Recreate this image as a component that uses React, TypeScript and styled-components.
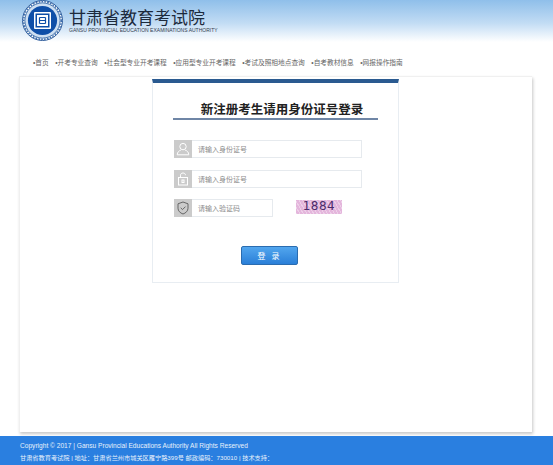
import { FunctionComponent, ReactNode } from "react";
import styled, { createGlobalStyle } from "styled-components";

const GlobalStyle = createGlobalStyle`
  html, body {
    margin: 0;
    padding: 0;
    background: #fff;
    font-family: "Liberation Sans", "Noto Sans CJK SC", sans-serif;
  }
  * {
    box-sizing: border-box;
  }
`;

const navItems = [
  "首页",
  "开考专业查询",
  "社会型专业开考课程",
  "应用型专业开考课程",
  "考试及照相地点查询",
  "自考教材信息",
  "网报操作指南",
];

const Logo = () => (
  <svg width="41" height="41" viewBox="0 0 41 41">
    <circle cx="20.5" cy="20.5" r="20" fill="#fff" stroke="#2f5d9c" strokeWidth="1" />
    <circle cx="20.5" cy="20.5" r="17.6" fill="#cfe0f2" stroke="#4a78b0" strokeWidth="1" />
    <circle cx="20.5" cy="20.5" r="18.8" fill="none" stroke="#3f6fae" strokeWidth="1.6" strokeDasharray="1.6 1.3" />
    <circle cx="20.5" cy="20.5" r="14.6" fill="#0f4fa8" />
    <rect x="12" y="12" width="17" height="17" rx="1" fill="#fff" />
    <rect x="13.5" y="13.5" width="14" height="14" fill="#0f4fa8" />
    <rect x="15" y="15" width="11" height="11" fill="#fff" />
    <path d="M17.5 17.5h6M17.5 20.5h6M17.5 23.5h6M17.5 17.5v6M23.5 17.5v6" stroke="#0f4fa8" strokeWidth="1.2" fill="none" />
  </svg>
);

const UserIcon = () => (
  <svg width="14" height="14" viewBox="0 0 14 14" fill="none" stroke="#fff" strokeWidth="1">
    <circle cx="7" cy="4.6" r="3.2" />
    <path d="M1.2 12.8c0-2.6 2-4.3 3.6-4.6M12.8 12.8c0-2.6-2-4.3-3.6-4.6M1.2 12.8h11.6" />
  </svg>
);

const LockIcon = () => (
  <svg width="14" height="14" viewBox="0 0 14 14" fill="none" stroke="#fff" strokeWidth="1">
    <rect x="2.5" y="5.5" width="9" height="7.5" />
    <path d="M4.5 5.5V3.2C4.5 1.8 5.6 1 7 1s2.5.8 2.5 2.2" />
    <rect x="6" y="8" width="2" height="2.5" />
  </svg>
);

const ShieldIcon = () => (
  <svg width="14" height="14" viewBox="0 0 14 14" fill="none" stroke="#666" strokeWidth="1">
    <path d="M7 1l5 1.8v4.4c0 2.8-2.2 4.8-5 5.8-2.8-1-5-3-5-5.8V2.8z" />
    <path d="M4.7 6.8l1.8 1.8 3-3" />
  </svg>
);

const Field: FunctionComponent<{
  icon: ReactNode;
  placeholder: string;
  short?: boolean;
}> = (props) => {
  return (
    <FieldBox $short={props.short}>
      <IconCell>{props.icon}</IconCell>
      <FieldText>{props.placeholder}</FieldText>
    </FieldBox>
  );
};

const App = () => {
  return (
    <Page>
      <GlobalStyle />
      <Header>
        <Brand>
          <Logo />
          <BrandText>
            <BrandName>甘肃省教育考试院</BrandName>
            <BrandEnglish>GANSU PROVINCIAL EDUCATION EXAMINATIONS AUTHORITY</BrandEnglish>
          </BrandText>
        </Brand>
      </Header>
      <Nav>
        {navItems.map((item) => (
          <NavItem key={item}>•{item}</NavItem>
        ))}
      </Nav>
      <Main>
        <LoginBox>
          <Title>新注册考生请用身份证号登录</Title>
          <Fields>
            <Field icon={<UserIcon />} placeholder="请输入身份证号" />
            <Field icon={<LockIcon />} placeholder="请输入身份证号" />
            <CaptchaRow>
              <Field icon={<ShieldIcon />} placeholder="请输入验证码" short />
              <Captcha>1884</Captcha>
            </CaptchaRow>
          </Fields>
          <LoginButton>登 录</LoginButton>
        </LoginBox>
      </Main>
      <Footer>
        <FooterCopy>Copyright © 2017 | Gansu Provincial Educations Authority All Rights Reserved</FooterCopy>
        <FooterLine>甘肃省教育考试院 | 地址：甘肃省兰州市城关区雁宁路399号 邮政编码：730010 | 技术支持：</FooterLine>
      </Footer>
    </Page>
  );
};

const Page = styled.div`
  width: 553px;
  height: 465px;
  overflow: hidden;
  display: flex;
  flex-direction: column;
  background: #fff;
`;

const Header = styled.div`
  height: 42px;
  padding: 0 0 0 22px;
  background: linear-gradient(180deg, #8fbfea 0%, #c2dcf4 55%, #ffffff 100%);
`;

const Brand = styled.div`
  display: flex;
  align-items: flex-start;
  gap: 6px;
`;

const BrandText = styled.div`
  padding-top: 10px;
  display: flex;
  flex-direction: column;
`;

const BrandName = styled.div`
  font-size: 17px;
  line-height: 18px;
  color: #1c2a3c;
  white-space: nowrap;
`;

const BrandEnglish = styled.div`
  font-size: 5px;
  line-height: 5px;
  color: #33404f;
  white-space: nowrap;
`;

const Nav = styled.div`
  height: 34px;
  padding: 15px 0 0 33px;
  display: flex;
  gap: 6.5px;
`;

const NavItem = styled.div`
  font-size: 6.7px;
  line-height: 12px;
  color: #666;
  white-space: nowrap;
`;

const Main = styled.div`
  width: 513px;
  height: 356px;
  margin-left: 19px;
  padding: 2px 0 0 132px;
  background: #fff;
  border-top: 1px solid #f0f0f0;
  border-left: 1px solid #f0f0f0;
  box-shadow: 1px 2px 3px rgba(0, 0, 0, 0.22);
`;

const LoginBox = styled.div`
  width: 247px;
  height: 204px;
  display: flex;
  flex-direction: column;
  border: 1px solid #e8edf2;
  border-top: 4px solid #2a5a90;
`;

const Title = styled.div`
  margin: 17px 20px 0;
  padding-left: 13px;
  height: 20px;
  font-size: 12.5px;
  font-weight: bold;
  line-height: 20px;
  text-align: center;
  color: #222;
  border-bottom: 2px solid #6f86a6;
  white-space: nowrap;
`;

const Fields = styled.div`
  margin: 20px 0 0 21px;
  display: flex;
  flex-direction: column;
  gap: 12px;
`;

const FieldBox = styled.div<{ $short?: boolean }>`
  width: ${(p) => (p.$short ? "99px" : "188px")};
  height: 18px;
  display: flex;
  align-items: center;
  border: 1px solid #e6eaee;
`;

const IconCell = styled.div`
  width: 18px;
  height: 18px;
  margin: -1px 0 -1px -1px;
  display: flex;
  align-items: center;
  justify-content: center;
  background: #cbcbcb;
`;

const FieldText = styled.div`
  margin-left: 6px;
  font-size: 7px;
  color: #8c8c8c;
  white-space: nowrap;
`;

const CaptchaRow = styled.div`
  display: flex;
  align-items: center;
  gap: 23px;
  margin-top: -1px;
`;

const Captcha = styled.div`
  width: 46px;
  height: 14px;
  margin-bottom: 2px;
  font-family: "DejaVu Sans", sans-serif;
  font-size: 12px;
  line-height: 13px;
  letter-spacing: 0.5px;
  text-align: center;
  color: #4b2a6b;
  background:
    repeating-linear-gradient(60deg, rgba(255, 255, 255, 0.35) 0 1px, transparent 1px 3px),
    #e4b6dc;
`;

const LoginButton = styled.button`
  width: 57px;
  height: 19px;
  margin: 29px 0 0 88px;
  padding: 0;
  font-family: inherit;
  font-size: 8px;
  letter-spacing: 2px;
  color: #fff;
  background: linear-gradient(180deg, #52a6ee 0%, #2a7fd8 100%);
  border: 1px solid #2a6cb0;
  border-radius: 2px;
`;

const Footer = styled.div`
  margin-top: 4px;
  flex: 1;
  padding: 5px 0 0 20px;
  background: #2a7fe0;
  color: #e8f1fb;
`;

const FooterCopy = styled.div`
  font-size: 6.6px;
  line-height: 10px;
  white-space: nowrap;
`;

const FooterLine = styled.div`
  margin-top: 2px;
  font-size: 6.2px;
  line-height: 10px;
  white-space: nowrap;
`;

export default App;
